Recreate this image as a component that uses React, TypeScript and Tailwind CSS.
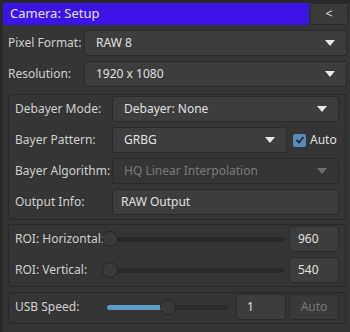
import React from 'react';

const Arrow: React.FC<{ dim?: boolean }> = ({ dim }) => (
  <svg width="10" height="6" viewBox="0 0 10 6" className="shrink-0">
    <path d="M0 0 L10 0 L5 6 Z" fill={dim ? '#6e6e6e' : '#e8e8e8'} />
  </svg>
);

const Combo: React.FC<{ value: string; dim?: boolean; className?: string }> = ({ value, dim, className }) => (
  <div
    className={`h-[26px] flex items-center justify-between pl-[11px] pr-[11px] rounded-[3px] border border-[#2a2a2a] ${
      dim ? 'bg-[#353535] text-[#7a7a7a]' : 'bg-[#3d3d3d] text-[#e0e0e0]'
    } ${className ?? ''}`}
  >
    <span>{value}</span>
    <Arrow dim={dim} />
  </div>
);

const Box: React.FC<{ children: React.ReactNode; className?: string }> = ({ children, className }) => (
  <div
    className={`h-[26px] w-[50px] shrink-0 flex items-center pl-[8px] rounded-[3px] border border-[#2a2a2a] bg-[#3d3d3d] text-[#e0e0e0] ${
      className ?? ''
    }`}
  >
    {children}
  </div>
);

const Slider: React.FC<{ pos: number; fill?: boolean; className?: string }> = ({ pos, fill, className }) => (
  <div className={`relative h-[26px] min-w-0 flex items-center ${className ?? ''}`}>
    <div className="w-full h-[5px] rounded-full bg-[#2a2a2a] overflow-hidden">
      {fill && <div className="h-full bg-[#5b9cc4]" style={{ width: `${pos}px` }} />}
    </div>
    <div
      className="absolute top-[5px] w-[16px] h-[16px] rounded-full bg-[#3a3a3a] border border-[#252525]"
      style={{ left: `${pos - 8}px` }}
    />
  </div>
);

const Group: React.FC<{ children: React.ReactNode; className?: string }> = ({ children, className }) => (
  <div className={`ml-[5px] mr-[4px] border border-[#282828] rounded-[3px] pl-[6px] pr-[6px] ${className ?? ''}`}>
    {children}
  </div>
);

export default function App() {
  return (
    <div
      className="w-[350px] h-[332px] bg-[#353535] border-t-[3px] border-l-[3px] border-[#2a2a2a] text-[12px] text-[#cfcfcf] overflow-hidden whitespace-nowrap"
      style={{ fontFamily: '"Noto Sans", "DejaVu Sans", sans-serif' }}
    >
      <div className="flex h-[22px]">
        <div className="flex-1 bg-[#3d14e6] text-[#e4e0ff] text-[13px] flex items-center pl-[7px]">Camera: Setup</div>
        <div className="w-[38px] ml-[1px] mr-[2px] rounded-[3px] border border-[#2a2a2a] bg-[#3b3b3b] text-[#e0e0e0] flex items-center justify-center">
          &lt;
        </div>
      </div>

      <div className="flex items-center mt-[5px] pl-[5px] pr-[3px]">
        <span className="w-[76px] shrink-0">Pixel Format:</span>
        <Combo value="RAW 8" className="flex-1" />
      </div>
      <div className="flex items-center mt-[5px] pl-[5px] pr-[3px]">
        <span className="w-[76px] shrink-0">Resolution:</span>
        <Combo value="1920 x 1080" className="flex-1" />
      </div>

      <Group className="mt-[7px] pt-[1px] pb-[4px] flex flex-col gap-[5px]">
        <div className="flex items-center">
          <span className="w-[97px] shrink-0">Debayer Mode:</span>
          <Combo value="Debayer: None" className="flex-1" />
        </div>
        <div className="flex items-center">
          <span className="w-[97px] shrink-0">Bayer Pattern:</span>
          <Combo value="GRBG" className="w-[175px]" />
          <div className="ml-[6px] flex items-center gap-[4px]">
            <div className="w-[13px] h-[13px] rounded-[2px] bg-[#5a8bb8] flex items-center justify-center">
              <svg width="10" height="10" viewBox="0 0 10 10">
                <path d="M1.5 5 L4 7.5 L8.5 2" stroke="#1e2a36" strokeWidth="1.8" fill="none" />
              </svg>
            </div>
            <span className="text-[#e0e0e0]">Auto</span>
          </div>
        </div>
        <div className="flex items-center">
          <span className="w-[97px] shrink-0">Bayer Algorithm:</span>
          <Combo value="HQ Linear Interpolation" dim className="flex-1" />
        </div>
        <div className="flex items-center">
          <span className="w-[97px] shrink-0">Output Info:</span>
          <div className="flex-1 h-[26px] flex items-center pl-[8px] rounded-[3px] border border-[#2a2a2a] bg-[#3d3d3d] text-[#e0e0e0]">
            RAW Output
          </div>
        </div>
      </Group>

      <Group className="mt-[4px] pt-[1px] pb-[3px] flex flex-col gap-[5px]">
        <div className="flex items-center">
          <span className="w-[87px] shrink-0">ROI: Horizontal:</span>
          <Slider pos={8} className="flex-1" />
          <Box className="ml-[5px]">960</Box>
        </div>
        <div className="flex items-center">
          <span className="w-[87px] shrink-0">ROI: Vertical:</span>
          <Slider pos={8} className="flex-1" />
          <Box className="ml-[5px]">540</Box>
        </div>
      </Group>

      <Group className="mt-[5px] pt-[1px] pb-[3px]">
        <div className="flex items-center">
          <span className="w-[92px] shrink-0">USB Speed:</span>
          <Slider pos={61} fill className="w-[122px]" />
          <Box className="ml-[7px] pl-[10px]">1</Box>
          <div className="ml-[3px] h-[26px] w-[50px] flex items-center justify-center rounded-[3px] border border-[#2a2a2a] bg-[#393939] text-[#777777]">
            Auto
          </div>
        </div>
      </Group>
    </div>
  );
}
